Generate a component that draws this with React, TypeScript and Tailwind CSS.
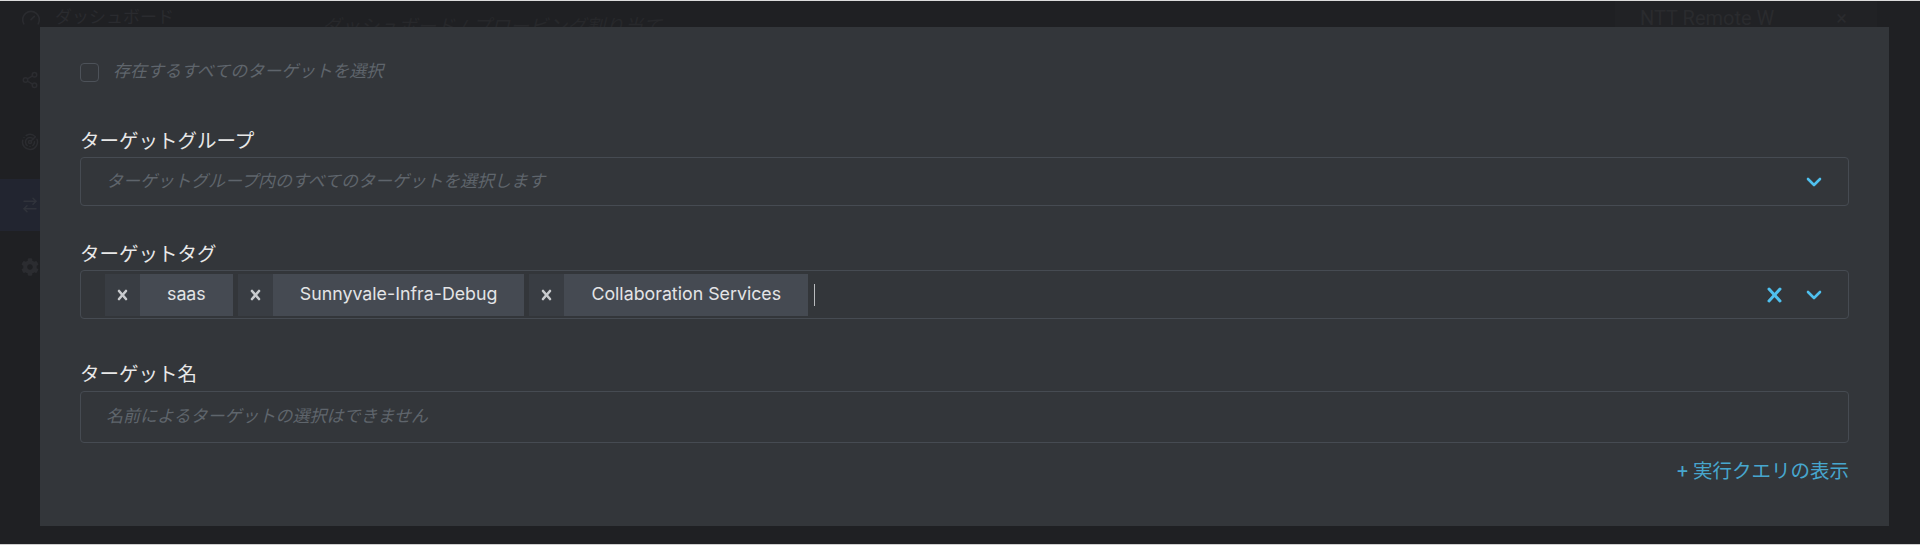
import { Gauge, Radar, ArrowRightLeft, Share2 } from 'lucide-react';
import { FaCog } from 'react-icons/fa';

// ── Small drawings ─────────────────────────────────────────────────────────

const Chevron = () => (
  <svg width="16" height="10" viewBox="0 0 16 10" fill="none" stroke="#4fc0ee" strokeWidth="2.6" strokeLinecap="round" strokeLinejoin="round">
    <polyline points="2,2 8,8 14,2" />
  </svg>
);

const ClearX = () => (
  <svg width="15" height="16" viewBox="0 0 15 16" fill="none" stroke="#4fc0ee" strokeWidth="3" strokeLinecap="round">
    <line x1="2" y1="2" x2="13" y2="14" />
    <line x1="13" y1="2" x2="2" y2="14" />
  </svg>
);

const ChipX = () => (
  <svg width="11" height="12" viewBox="0 0 11 12" fill="none" stroke="#c9cbce" strokeWidth="2.6" strokeLinecap="round">
    <line x1="2" y1="2" x2="9" y2="10" />
    <line x1="9" y1="2" x2="2" y2="10" />
  </svg>
);

// ── Tag chip ───────────────────────────────────────────────────────────────

const Chip = ({ label }: { label: string }) => (
  <div className="flex h-[42px] shrink-0">
    <div className="w-[35px] flex items-center justify-center bg-[#393d43]">
      <ChipX />
    </div>
    <div className="flex items-center px-[27px] bg-[#454a52] text-[17.8px] text-[#e3e4e6] font-['Inter','Noto_Sans_CJK_JP',sans-serif]">
      {label}
    </div>
  </div>
);

const Label = ({ children }: { children: string }) => (
  <div className="text-[19.5px] leading-[24px] text-[#e8e8e8]">{children}</div>
);

const Placeholder = ({ children }: { children: string }) => (
  <span className="text-[17px] italic text-[#5f656c]">{children}</span>
);

// ── Page ───────────────────────────────────────────────────────────────────

export default function App() {
  const tags = ['saas', 'Sunnyvale-Infra-Debug', 'Collaboration Services'];

  return (
    <div className="relative w-full h-[545px] overflow-hidden bg-[#1f2023] border-t border-[#dcdcdc] font-['Roboto','Noto_Sans_CJK_JP',sans-serif]">
      {/* page behind the overlay */}
      <div className="flex h-full">
        <div className="w-[250px] shrink-0 flex flex-col">
          <div className="h-[34px] flex items-center pl-[21px] gap-[14px] text-[#2a2b2f]">
            <Gauge size={20} />
            <span className="text-[17px]">ダッシュボード</span>
          </div>
          <div className="h-[62px] mt-[14px] flex items-center pl-[21px] text-[#2b2c30]">
            <Share2 size={18} />
          </div>
          <div className="h-[62px] flex items-center pl-[21px] text-[#2b2c30]">
            <Radar size={18} />
          </div>
          <div className="h-[52px] mt-[6px] flex items-center pl-[21px] bg-[#222530] text-[#30333b]">
            <ArrowRightLeft size={18} />
          </div>
          <div className="h-[72px] flex items-center pl-[21px] text-[#2b2c30]">
            <FaCog size={18} />
          </div>
        </div>
        <div className="flex-1 flex items-start pt-[12px]">
          <div className="pl-[72px] text-[19px] italic text-[#27282b]">ダッシュボード / プロービング割り当て</div>
          <div className="ml-auto mr-[43px] w-[262px] h-[34px] -mt-[12px] bg-[#212225] flex items-center pl-[25px] pr-[30px] text-[20px] text-[#2a2b2e]">
            <span>NTT Remote W</span>
            <span className="ml-auto">×</span>
          </div>
        </div>
      </div>
      <div className="absolute left-0 right-0 bottom-0 h-px bg-[#cfcfcf]" />

      {/* modal */}
      <div className="absolute left-[40px] top-[26px] w-[1849px] h-[499px] bg-[#33363a] px-[40px] pt-[35px]">
        <div className="flex items-center h-[20px] gap-[14px]">
          <div className="w-[19px] h-[19px] rounded-[4px] border-[1.5px] border-[#4d5259]" />
          <Placeholder>存在するすべてのターゲットを選択</Placeholder>
        </div>

        <div className="mt-[48px]">
          <Label>ターゲットグループ</Label>
          <div className="mt-[3px] h-[49px] rounded-[4px] border border-[#464b52] flex items-center pl-[25px] pr-[26px]">
            <Placeholder>ターゲットグループ内のすべてのターゲットを選択します</Placeholder>
            <div className="ml-auto"><Chevron /></div>
          </div>
        </div>

        <div className="mt-[37px]">
          <Label>ターゲットタグ</Label>
          <div className="mt-[3px] h-[49px] rounded-[4px] border border-[#464b52] flex items-center pl-[24px] pr-[26px] gap-[5px]">
            {tags.map(t => (
              <Chip key={t} label={t} />
            ))}
            <div className="ml-[1px] w-px h-[22px] bg-[#b9bbbe]" />
            <div className="ml-auto flex items-center gap-[24px]">
              <ClearX />
              <Chevron />
            </div>
          </div>
        </div>

        <div className="mt-[44px]">
          <Label>ターゲット名</Label>
          <div className="mt-[4px] h-[52px] rounded-[4px] border border-[#464b52] flex items-center pl-[25px]">
            <Placeholder>名前によるターゲットの選択はできません</Placeholder>
          </div>
        </div>

        <div className="mt-[17px] flex justify-end">
          <span className="text-[19.5px] leading-[24px] text-[#47a6ce]">+ 実行クエリの表示</span>
        </div>
      </div>
    </div>
  );
}
